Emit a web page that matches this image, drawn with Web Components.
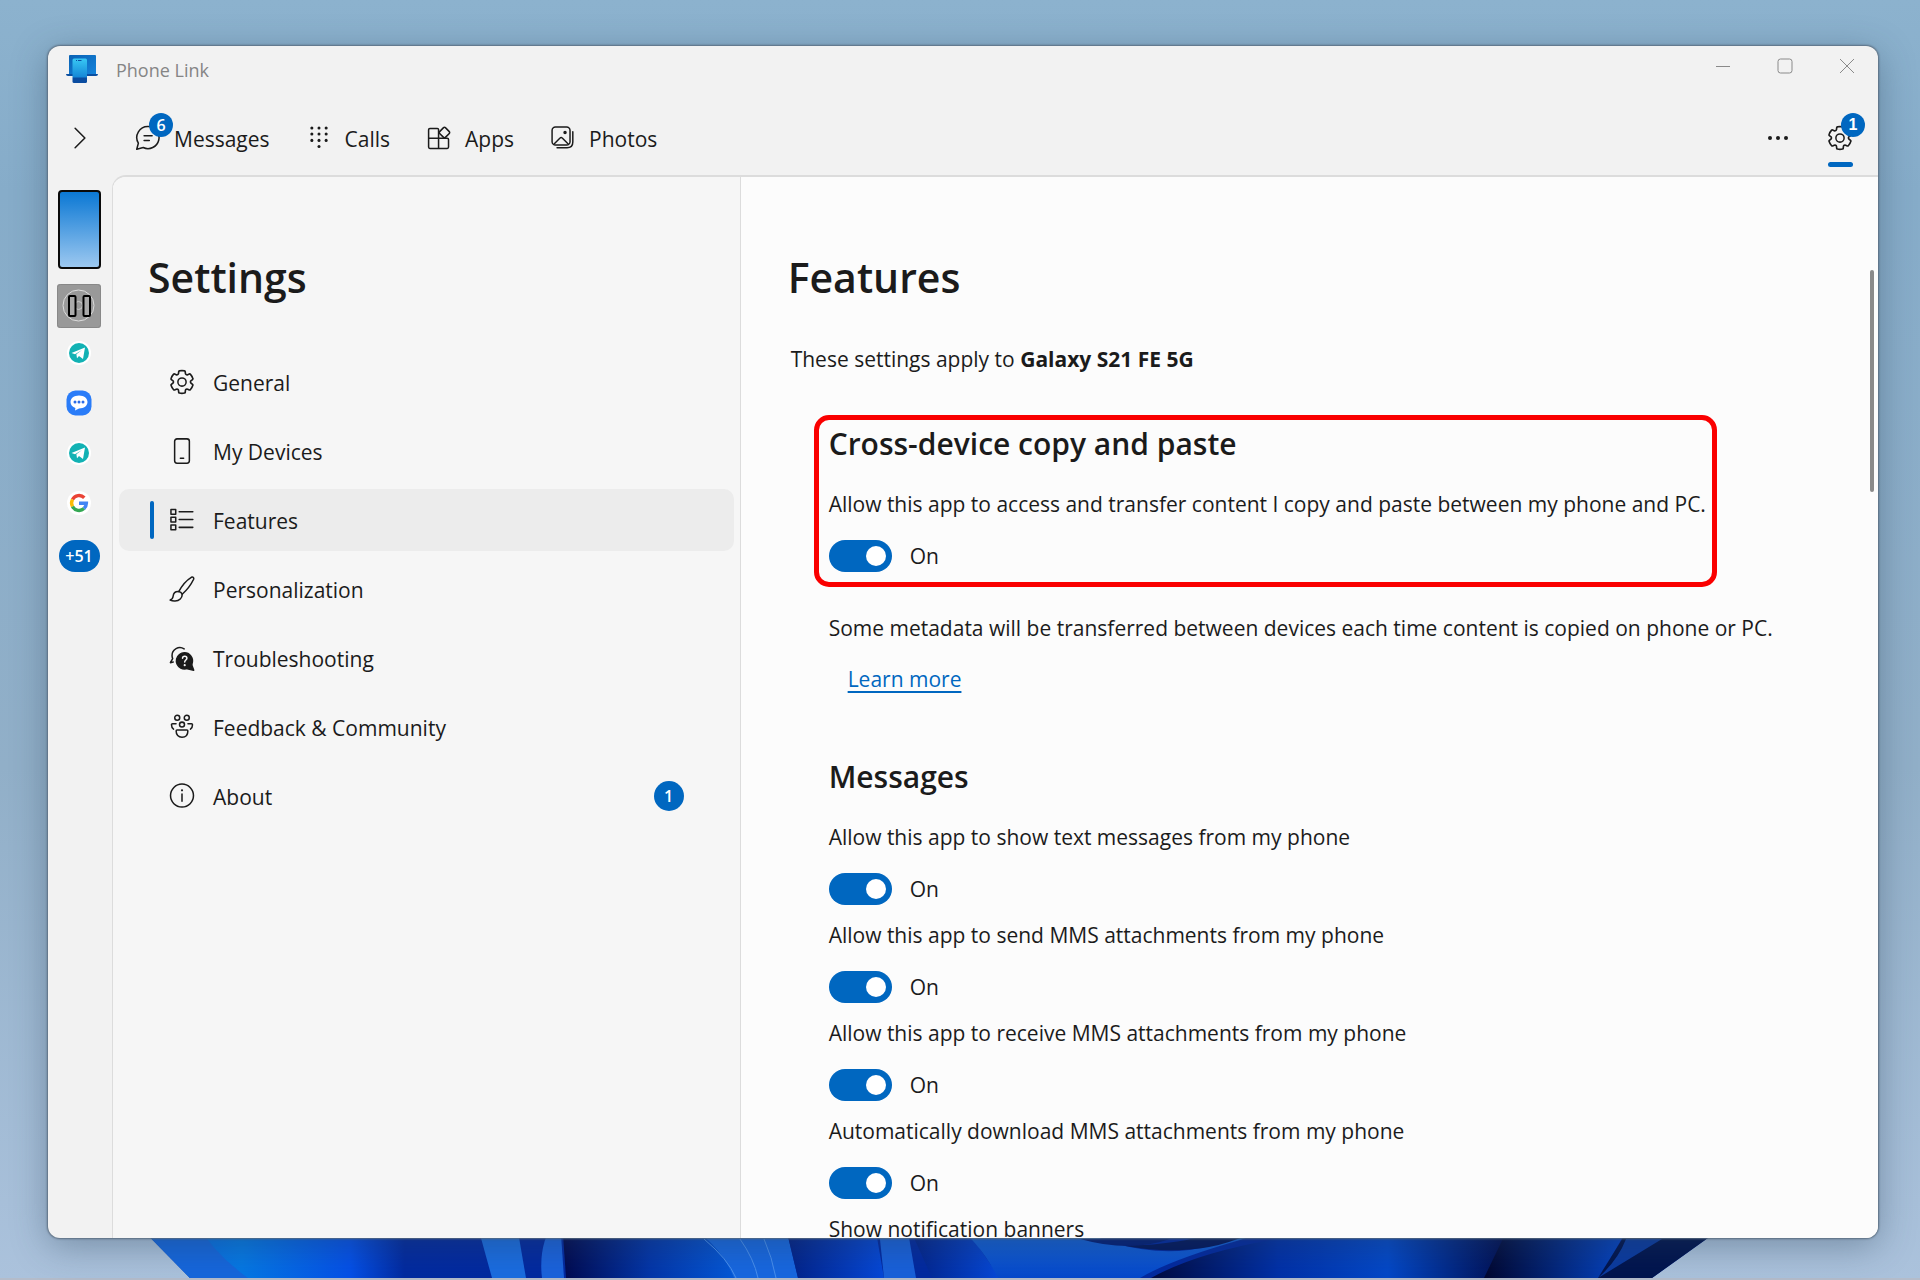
<!DOCTYPE html>
<html lang="en">
<head>
<meta charset="utf-8">
<meta name="viewport" content="width=device-width, initial-scale=1">
<title>Phone Link</title>
<style>
    body {
        margin: 0;
        font-family: "Open Sans", "Noto Sans", sans-serif;
        font-size: 21px;
        line-height: 28px;
        color: #1b1b1b;
        --accent: #0067c0;
        --line: #dcdcdc;
    }
</style>
</head>
<body>

<desk-top>
    <app-window>
        <title-bar slot="title">Phone Link</title-bar>
        <nav-bar slot="nav">
            <nav-item icon="chat" badge="6">Messages</nav-item>
            <nav-item icon="dialpad">Calls</nav-item>
            <nav-item icon="apps">Apps</nav-item>
            <nav-item icon="photos">Photos</nav-item>
        </nav-bar>
        <device-rail slot="rail"></device-rail>
        <settings-menu slot="menu" heading="Settings">
            <settings-item icon="gear">General</settings-item>
            <settings-item icon="phone">My Devices</settings-item>
            <settings-item icon="list" selected>Features</settings-item>
            <settings-item icon="brush">Personalization</settings-item>
            <settings-item icon="help">Troubleshooting</settings-item>
            <settings-item icon="people">Feedback &amp; Community</settings-item>
            <settings-item icon="info" badge="1">About</settings-item>
        </settings-menu>
        <features-page heading="Features" device="Galaxy S21 FE 5G">
            <setting-group heading="Cross-device copy and paste" outlined>
                <toggle-row checked>Allow this app to access and transfer content I copy and paste between my phone and PC.</toggle-row>
            </setting-group>
            <setting-note href="#learn-more" link="Learn more">Some metadata will be transferred between devices each time content is copied on phone or PC.</setting-note>
            <setting-group heading="Messages">
                <toggle-row checked>Allow this app to show text messages from my phone</toggle-row>
                <toggle-row checked>Allow this app to send MMS attachments from my phone</toggle-row>
                <toggle-row checked>Allow this app to receive MMS attachments from my phone</toggle-row>
                <toggle-row checked>Automatically download MMS attachments from my phone</toggle-row>
                <div>Show notification banners</div>
            </setting-group>
        </features-page>
    </app-window>
</desk-top>

<script>
const icons = {
    gear: `<path d="M12 2.25c.75 0 1.48.1 2.2.25.3.07.54.33.58.65l.17 1.53a1.38 1.38 0 0 0 1.92 1.11l1.4-.61c.3-.13.63-.06.85.17a9.8 9.8 0 0 1 2.2 3.8c.1.3 0 .63-.26.82l-1.24.92a1.38 1.38 0 0 0 0 2.22l1.24.92c.26.19.36.52.27.82a9.8 9.8 0 0 1-2.2 3.8c-.22.23-.56.3-.85.17l-1.41-.62a1.38 1.38 0 0 0-1.93 1.12l-.16 1.52a.75.75 0 0 1-.58.65 9.5 9.5 0 0 1-4.4 0 .75.75 0 0 1-.57-.65l-.17-1.52a1.38 1.38 0 0 0-1.93-1.11l-1.4.62a.75.75 0 0 1-.85-.18 9.8 9.8 0 0 1-2.2-3.8c-.1-.3 0-.63.26-.82l1.24-.92a1.38 1.38 0 0 0 0-2.22l-1.24-.92a.75.75 0 0 1-.27-.82 9.8 9.8 0 0 1 2.2-3.8.75.75 0 0 1 .85-.17l1.4.61A1.38 1.38 0 0 0 9.06 4.68l.17-1.53c.04-.32.27-.58.58-.65.72-.15 1.45-.24 2.19-.25z" transform="translate(-1 -1) scale(1.08)"/><circle cx="12" cy="12" r="3.8"/>`,
    chat: `<path d="M12.4 1.4a10.2 10.2 0 1 1-4.8 19.4L1.6 22.4l1.5-5.6A10.2 10.2 0 0 1 12.4 1.4z"/><path d="M8.4 10h7.4M8.4 14.2h4.800"/>`,
    dialpad: `<g fill="currentColor" stroke="none"><circle cx="5.4" cy="2.8" r="1.4"/><circle cx="12" cy="2.8" r="1.4"/><circle cx="18.6" cy="2.8" r="1.4"/><circle cx="5.4" cy="8.4" r="1.4"/><circle cx="12" cy="8.4" r="1.4"/><circle cx="18.6" cy="8.4" r="1.4"/><circle cx="5.4" cy="14.2" r="1.4"/><circle cx="12" cy="14.2" r="1.4"/><circle cx="18.6" cy="14.2" r="1.4"/><circle cx="12" cy="19.8" r="1.4"/></g>`,
    apps: `<path d="M11.6 12.2V4.4c0-.7-.5-1.200-1.200-1.200H3.600c-.7 0-1.200.5-1.200 1.200v16c0 .7.5 1.200 1.200 1.200h16c.7 0 1.200-.5 1.200-1.200v-7c0-.7-.5-1.200-1.200-1.200H2.400M11.600 12.200v9.400"/><path d="M16.200 2.400a1.200 1.200 0 0 1 1.700 0l3.600 3.700a1.200 1.200 0 0 1 0 1.700l-3.600 3.600a1.200 1.200 0 0 1-1.700 0l-3.600-3.600a1.200 1.200 0 0 1 0-1.700z"/>`,
    photos: `<g transform="translate(1 1) scale(.92)" stroke-width="1.5"><rect x="1" y="1" width="18" height="18" rx="3.4"/><path d="M3 18l6-6a1.500 1.500 0 0 1 2.200 0l6 6"/><circle cx="14" cy="6.400" r="1" fill="currentColor"/><path d="M21.800 5.600v10.400c0 3.600-2.200 5.800-5.800 5.800H6"/></g>`,
    phone: `<rect x="5.200" y=".8" width="13.600" height="22.400" rx="2.200"/><path d="M10.500 18.600h3"/>`,
    list: `<rect x="1.800" y="2.200" width="4.400" height="4.400"/><rect x="1.800" y="9.400" width="4.400" height="4.400"/><rect x="1.800" y="16.600" width="4.400" height="4.400"/><path d="M9.400 4.400H22M9.400 11.600H22M9.400 18.800H22"/>`,
    brush: `<path d="M9 14.400C12 8.800 17 3.400 20.600 1.200c1.600-.8 2.700.4 2 2C20.600 7.400 16.500 12.900 12.200 16.800"/><path d="M9 14.400c1.500.3 2.600 1.200 3.200 2.400.2 3.200-2.600 6.600-7.200 6.300-1.500 0-2.900-.4-3.900-.9 2-.7 2.500-1.600 2.700-3.500.3-2.700 2.300-4.500 5.200-4.300z"/>`,
    help: `<path d="M14 3.600A7.200 7.200 0 0 0 2.800 9.800c0 1 .2 2 .6 2.800L1.300 16.300l2.600-.5"/><path fill="currentColor" d="M14.300 7.200a7.400 7.400 0 1 1-3.400 14 7.400 7.400 0 0 1 3.400-14z"/><path fill="currentColor" d="M20.500 17l2.300 6.300-5.800-1.400z"/><path stroke="#f6f6f6" d="M12.500 12.200c.1-2.600 4-2.500 4 0 0 1.600-2 1.700-2 3.500"/><circle cx="14.500" cy="18.600" r="1" fill="#f6f6f6" stroke="none"/>`,
    people: `<circle cx="7.600" cy="3.400" r="2.300"/><circle cx="16.400" cy="3.400" r="2.300"/><circle cx="12" cy="9.800" r="2.300"/><path d="M7.400 14.800h9.200c.5 0 .8.300.8.800 0 3.700-2 5.800-5.400 5.800s-5.400-2.100-5.400-5.800c0-.5.3-.8.8-.8z"/><path d="M6.500 9H3.300c-.6 0-1 .4-1 1 0 1.800.5 3 1.900 4M17.500 9h3.200c.6 0 1 .4 1 1 0 1.800-.5 3-1.900 4"/>`,
    info: `<circle cx="12" cy="11.600" r="10.600"/><path d="M12 10.200v6.600"/><circle cx="12" cy="6.800" r="1" fill="currentColor" stroke="none"/>`,
    chevron: `<path d="M7.500 3l9 9-9 9"/>`,
    more: `<g fill="currentColor" stroke="none"><circle cx="4" cy="12" r="2"/><circle cx="12" cy="12" r="2"/><circle cx="20" cy="12" r="2"/></g>`
};

const define = (name, render, setup) => {
    customElements.define(name, class extends HTMLElement {
        constructor() {
            super();
            this.attachShadow({ mode: "open" });
        }

        connectedCallback() {
            const template = document.createElement("template");
            template.innerHTML = render(this);
            this.shadowRoot.replaceChildren(template.content.cloneNode(true));

            if(setup) {
                setup(this);
            }
        }
    });
};

define("ui-icon", el => `
    <style>
    :host {
        display: block;
        flex: none;
        width: 26px;
        height: 26px;
    }

    svg {
        display: block;
        width: 100%;
        height: 100%;
        fill: none;
        stroke: currentColor;
        stroke-width: 1.4;
        stroke-linecap: round;
        stroke-linejoin: round;
    }
    </style>
    <svg viewBox="0 0 24 24" aria-hidden="true">${icons[el.getAttribute("name")]}</svg>
`);

define("count-badge", () => `
    <style>
    :host {
        display: flex;
        justify-content: center;
        align-items: center;
        box-sizing: border-box;
        min-width: 24px;
        height: 24px;
        border-radius: 16px;
        background: var(--accent);
        color: #fff;
        font-size: 16px;
        font-weight: 600;
    }
    </style>
    <slot></slot>
`);

define("desk-top", () => `
    <style>
    :host {
        display: grid;
        position: relative;
        box-sizing: border-box;
        height: 100vh;
        padding: 46px 42px 42px 48px;
        background: linear-gradient(#8cb2ce, #86acc9 15%, #91afc8 60%, #abc2dc);
        overflow: hidden;
    }

    .bloom {
        position: absolute;
        left: 0;
        bottom: 0;
        width: 100%;
        height: 60px;
    }

    ::slotted(*) {
        position: relative;
        min-height: 0;
    }
    </style>
    <svg class="bloom" viewBox="0 1220 1920 60" preserveAspectRatio="none" aria-hidden="true">
        <defs>
            <linearGradient id="a"><stop offset="0" stop-color="#0f5ce0"/><stop offset=".3" stop-color="#0578e4"/><stop offset=".6" stop-color="#0450e8"/><stop offset=".75" stop-color="#022aa0"/><stop offset="1" stop-color="#0229a0"/></linearGradient>
            <linearGradient id="b"><stop offset="0" stop-color="#01094f"/><stop offset=".5" stop-color="#0335a8"/><stop offset="1" stop-color="#0458d8"/></linearGradient>
            <linearGradient id="c"><stop offset="0" stop-color="#022084"/><stop offset="1" stop-color="#0548d8"/></linearGradient>
            <linearGradient id="d"><stop offset="0" stop-color="#010a40"/><stop offset=".35" stop-color="#0130a8"/><stop offset=".65" stop-color="#0348c8"/><stop offset="1" stop-color="#010a48"/></linearGradient>
            <linearGradient id="e"><stop offset="0" stop-color="#010630"/><stop offset="1" stop-color="#0548cc"/></linearGradient>
            <linearGradient id="f" x2="0" y2="1"><stop offset="0" stop-color="#1a6ad8"/><stop offset="1" stop-color="#0448cc"/></linearGradient>
        </defs>
        <path fill="#0229a0" d="M133 1220h1600l-81 58H190z"/>
        <path fill="url(#a)" d="M133 1220h352l10 58H190z"/>
        <path fill="#1566dc" d="M133 1220h61q20 34 54 58h-58z"/>
        <path fill="#1a6ce0" d="M476 1220h40l10 58h-34z"/>
        <path fill="#1a62dc" d="M555 1220h5l4 58h-22q-4-34 13-58z"/>
        <path fill="url(#b)" d="M562 1220h130q38 30 44 58H566z"/>
        <path fill="#1767e0" d="M680 1220h104l14 58h-64q-14-36-54-58z"/>
        <path fill="none" stroke="#4a90ee" d="M704 1239q24 20 32 39M740 1239q14 20 18 39M764 1239q8 18 12 39"/>
        <path fill="url(#c)" d="M784 1220h90l10 58h-86z"/>
        <path fill="#1860da" d="M878 1220h28l10 58h-32z"/>
        <path fill="url(#c)" d="M906 1220h54l40 58h-68z"/>
        <path fill="url(#f)" d="M950 1220h110q80 44 150 26l90-26-60 20q-70 20-100 38h-142q-18-36-48-58z"/>
        <path fill="#021e78" d="M1080 1239h90q-40 14-90 0z"/>
        <path fill="#02175e" d="M1125 1246q60-2 90-14l30 4q-50 22-120 10z"/>
        <path fill="url(#d)" d="M1295 1236l220-16-30 58h-334q50-28 144-42z"/>
        <path fill="url(#e)" d="M1512 1220h120l-32 58h-116z"/>
        <path fill="#01144e" d="M1634 1220h99l-81 58h-54z"/>
        <path fill="#0a3aa0" d="M1626 1239h36l-64 39q20-18 28-39z"/>
        <path fill="#b4bcca" d="M0 1278h1920v2H0z"/>
    </svg>
    <slot></slot>
`);

define("app-window", () => `
    <style>
    :host {
        display: grid;
        grid-template: auto auto minmax(0, 1fr) / 64px minmax(0, 1fr);
        border-radius: 12px;
        background: #f2f2f2;
        box-shadow: 0 0 2px 1px #5a6c7e, 0 8px 36px #2a405866;
        overflow: hidden;
    }

    .title, .nav {
        grid-column: 1 / -1;
    }

    .body {
        display: grid;
        grid-template-columns: minmax(0, 628fr) minmax(0, 1138fr);
        border: solid var(--line);
        border-width: 2px 0 0 1px;
        border-top-left-radius: 14px;
        background: #fcfcfc;
        overflow: hidden;
    }

    ::slotted(*) {
        min-height: 0;
    }
    </style>
    <div class="title"><slot name="title"></slot></div>
    <div class="nav"><slot name="nav"></slot></div>
    <slot name="rail"></slot>
    <div class="body">
        <slot name="menu"></slot>
        <slot></slot>
    </div>
`);

define("title-bar", () => `
    <style>
    :host {
        display: flex;
        align-items: flex-start;
        height: 48px;
        color: #858585;
        font-size: 18px;
    }

    .logo {
        width: 32px;
        height: 30px;
        margin: 8px 18px 0;
    }

    .name {
        flex: 1;
        line-height: 48px;
    }

    button {
        display: grid;
        place-items: center;
        width: 62px;
        height: 40px;
        padding: 0;
        border: none;
        background: none;
        color: #8a8a8a;
    }

    button svg {
        width: 16px;
        height: 16px;
        fill: none;
        stroke: currentColor;
    }
    </style>
    <svg class="logo" viewBox="0 0 32 30" aria-hidden="true">
        <defs>
            <linearGradient id="screen" x2="1" y2="1"><stop offset="0" stop-color="#0a62b4"/><stop offset="1" stop-color="#1584dc"/></linearGradient>
            <linearGradient id="phone" x2="0" y2="1"><stop offset="0" stop-color="#38c8f4"/><stop offset=".75" stop-color="#1688d8"/><stop offset=".8" stop-color="#0a4ca0"/><stop offset="1" stop-color="#0a4ca0"/></linearGradient>
        </defs>
        <path fill="url(#screen)" d="M3 2q0-1 1-1h25q1 0 1 1v19H3z"/>
        <path fill="#0b4fa0" d="M0 20h32q0 2-2 2H2q-2 0-2-2z"/>
        <rect x="6.5" y="4.5" width="14.5" height="24.5" rx="1.5" fill="url(#phone)"/>
        <path stroke="#0a4ca0" d="M10 6.5h1M12 6.5h3.5"/>
    </svg>
    <span class="name"><slot></slot></span>
    <button aria-label="Minimize"><svg viewBox="0 0 16 16"><path d="M1 8.5h14"/></svg></button>
    <button aria-label="Maximize"><svg viewBox="0 0 16 16"><rect x="1" y="1" width="14" height="14" rx="2.5"/></svg></button>
    <button aria-label="Close"><svg viewBox="0 0 16 16"><path d="M1 1l14 14M15 1L1 15"/></svg></button>
`);

define("nav-bar", () => `
    <style>
    :host {
        display: flex;
        align-items: center;
        box-sizing: border-box;
        height: 81px;
        padding: 6px 24px 0 18px;
    }

    nav {
        display: flex;
        flex: 1;
        gap: 36px;
        margin-left: 41px;
    }

    button {
        display: grid;
        place-items: center;
        width: 28px;
        height: 62px;
        padding: 0;
        border: none;
        background: none;
        color: inherit;
    }

    .more {
        margin-right: 34px;
    }

    .more ui-icon {
        width: 24px;
    }

    .settings {
        position: relative;
    }

    .settings count-badge {
        position: absolute;
        left: 15px;
        top: 6px;
    }

    .settings::after {
        content: "";
        position: absolute;
        left: 2px;
        bottom: 2px;
        width: 25px;
        height: 5px;
        border-radius: 3px;
        background: var(--accent);
    }
    </style>
    <button aria-label="Expand"><ui-icon name="chevron"></ui-icon></button>
    <nav><slot></slot></nav>
    <button class="more" aria-label="More"><ui-icon name="more"></ui-icon></button>
    <button class="settings" aria-label="Settings"><ui-icon name="gear"></ui-icon><count-badge>1</count-badge></button>
`);

define("nav-item", el => `
    <style>
    :host {
        display: block;
    }

    a {
        display: flex;
        align-items: center;
        gap: 13px;
        position: relative;
        color: inherit;
        text-decoration: none;
    }

    .label {
        padding-top: 2px;
    }

    count-badge {
        position: absolute;
        left: 14px;
        top: -10px;
    }
    </style>
    <a href="#${el.getAttribute("icon")}">
        <ui-icon name="${el.getAttribute("icon")}"></ui-icon>
        <span class="label"><slot></slot></span>
        ${el.hasAttribute("badge") ? `<count-badge>${el.getAttribute("badge")}</count-badge>` : ""}
    </a>
`);

define("device-rail", () => `
    <style>
    :host {
        display: flex;
        flex-direction: column;
        align-items: center;
        padding: 15px 2px 0 0;
    }

    .phone {
        box-sizing: border-box;
        width: 43px;
        height: 79px;
        border: 2px solid #0a0a0a;
        border-radius: 4px;
        background: linear-gradient(#0b78d4, #9cc8f0);
    }

    .device {
        width: 44px;
        height: 44px;
        margin: 15px 0 12px;
    }

    .app {
        width: 26px;
        height: 26px;
        margin-bottom: 24px;
    }

    count-badge {
        width: 41px;
        height: 32px;
    }
    </style>
    <div class="phone"></div>
    <svg class="device" viewBox="0 0 44 44" aria-hidden="true">
        <rect width="44" height="44" rx="3" fill="#999"/>
        <rect x=".5" y=".5" width="43" height="43" rx="3" fill="none" stroke="#888"/>
        <circle cx="21.5" cy="21.5" r="15.5" fill="none" stroke="#ddd"/>
        <circle cx="21.5" cy="21.5" r="4" fill="none" stroke="#ccc"/>
        <rect x="12" y="12" width="6.5" height="20" rx="1" fill="#aaa" stroke="#000" stroke-width="2"/>
        <rect x="26.5" y="12" width="6.5" height="20" rx="1" fill="#aaa" stroke="#000" stroke-width="2"/>
    </svg>
    <svg class="app" viewBox="0 0 26 26" aria-hidden="true">
        <circle cx="13" cy="13" r="12" fill="#fff"/>
        <circle cx="13" cy="13" r="10" fill="#12b2b4"/>
        <path fill="#fff" d="M5.500 13L19 7.500l-2 11.500-4-3-2 2.200-.6-4L16 10l-7 4.200z"/>
    </svg>
    <svg class="app" viewBox="0 0 26 26" aria-hidden="true">
        <rect x=".5" y=".5" width="25" height="25" rx="9" fill="#2a7cf8"/>
        <path fill="#fff" d="M13 5.500c5 0 8.500 2.800 8.500 6.500s-3.500 6.500-8.500 6.500l-4 2 .4-2.500C6.500 17 4.500 14.800 4.500 12c0-3.700 3.500-6.500 8.500-6.500z"/>
        <g fill="#2a6ce8"><circle cx="9" cy="12" r="1.500"/><circle cx="13" cy="12" r="1.500"/><circle cx="17" cy="12" r="1.500"/></g>
    </svg>
    <svg class="app" viewBox="0 0 26 26" aria-hidden="true">
        <circle cx="13" cy="13" r="12" fill="#fff"/>
        <circle cx="13" cy="13" r="10" fill="#12b2b4"/>
        <path fill="#fff" d="M5.500 13L19 7.500l-2 11.500-4-3-2 2.200-.6-4L16 10l-7 4.200z"/>
    </svg>
    <svg class="app" viewBox="0 0 26 26" aria-hidden="true">
        <circle cx="13" cy="13" r="12" fill="#fff"/>
        <g fill="none" stroke-width="3.400">
            <path stroke="#ea4335" d="M6.500 9.500A7.400 7.400 0 0 1 18.300 7.800"/>
            <path stroke="#fbbc05" d="M6.500 16.500a7.400 7.400 0 0 1 0-7"/>
            <path stroke="#34a853" d="M18 18.500a7.400 7.400 0 0 1-11.500-2"/>
            <path stroke="#4285f4" d="M13 13.200h7.400a7.400 7.400 0 0 1-2.400 5.300"/>
        </g>
    </svg>
    <count-badge>+51</count-badge>
`);

define("settings-menu", el => `
    <style>
    :host {
        display: flex;
        flex-direction: column;
        box-sizing: border-box;
        padding: 72px 6px 0;
        border-right: 1px solid var(--line);
        background: #f6f6f6;
        overflow: hidden;
    }

    h1 {
        margin: 0 0 46px 29px;
        font-size: 41px;
        font-weight: 600;
        line-height: 56px;
    }

    nav {
        display: grid;
        gap: 7px;
    }
    </style>
    <h1>${el.getAttribute("heading")}</h1>
    <nav><slot></slot></nav>
`);

define("settings-item", el => `
    <style>
    :host {
        display: block;
    }

    a {
        display: flex;
        align-items: center;
        gap: 18px;
        position: relative;
        height: 62px;
        padding: 0 50px 0 50px;
        border-radius: 10px;
        color: inherit;
        text-decoration: none;
    }

    .label {
        flex: 1;
        padding-top: 2px;
    }

    :host([selected]) a {
        background: #ececec;
    }

    :host([selected]) a::before {
        content: "";
        position: absolute;
        left: 31px;
        width: 4px;
        height: 38px;
        border-radius: 2px;
        background: var(--accent);
    }

    count-badge {
        width: 30px;
        height: 30px;
    }
    </style>
    <a href="#${el.getAttribute("icon")}">
        <ui-icon name="${el.getAttribute("icon")}"></ui-icon>
        <span class="label"><slot></slot></span>
        ${el.hasAttribute("badge") ? `<count-badge>${el.getAttribute("badge")}</count-badge>` : ""}
    </a>
`);

define("features-page", el => `
    <style>
    :host {
        display: block;
        position: relative;
        padding: 72px 47px 0;
        overflow: hidden;
    }

    h1 {
        margin: 0 0 40px;
        font-size: 41px;
        font-weight: 600;
        line-height: 56px;
    }

    p {
        margin: 0 0 42px 3px;
    }

    .content {
        margin-left: 26px;
    }

    .thumb {
        position: absolute;
        top: 93px;
        right: 4px;
        width: 4px;
        height: 222px;
        border-radius: 2px;
        background: #8a8a8a;
    }
    </style>
    <h1>${el.getAttribute("heading")}</h1>
    <p>These settings apply to <b>${el.getAttribute("device")}</b></p>
    <div class="content"><slot></slot></div>
    <div class="thumb"></div>
`);

define("setting-group", el => `
    <style>
    :host {
        display: block;
        padding-left: 15px;
    }

    :host([outlined]) {
        width: fit-content;
        padding: 4px 6px 10px 10px;
        border: 5px solid #fa0000;
        border-radius: 15px;
    }

    h2 {
        margin: 0 0 26px;
        font-size: 30px;
        font-weight: 600;
        line-height: 40px;
    }

    .rows {
        display: grid;
        gap: 16px;
    }
    </style>
    <h2>${el.getAttribute("heading")}</h2>
    <div class="rows"><slot></slot></div>
`);

define("setting-note", el => `
    <style>
    :host {
        display: block;
        padding: 27px 0 64px 15px;
    }

    p {
        margin: 0 0 23px;
    }

    a {
        display: block;
        width: fit-content;
        margin-left: 19px;
        color: var(--accent);
        text-underline-offset: 4px;
    }
    </style>
    <p><slot></slot></p>
    <a href="${el.getAttribute("href")}">${el.getAttribute("link")}</a>
`);

define("toggle-row", el => `
    <style>
    :host {
        display: block;
    }

    label {
        display: block;
        margin-bottom: 22px;
    }

    .switch {
        display: flex;
        align-items: center;
        gap: 18px;
        height: 32px;
    }

    input {
        display: flex;
        align-items: center;
        box-sizing: border-box;
        appearance: none;
        width: 63px;
        height: 32px;
        margin: 0;
        padding: 0 6px;
        border-radius: 16px;
        background: #8a8a8a;
    }

    input::before {
        content: "";
        width: 20px;
        height: 20px;
        border-radius: 50%;
        background: #fff;
    }

    input:checked {
        justify-content: flex-end;
        background: var(--accent);
    }
    </style>
    <label for="toggle"><slot></slot></label>
    <div class="switch">
        <input type="checkbox" role="switch" id="toggle" ${el.hasAttribute("checked") ? "checked" : ""}>
        <span class="state">${el.hasAttribute("checked") ? "On" : "Off"}</span>
    </div>
`, el => {
    const input = el.shadowRoot.querySelector("input");
    const state = el.shadowRoot.querySelector(".state");

    input.addEventListener("change", () => {
        state.textContent = input.checked ? "On" : "Off";
    });
});
</script>
</body>
</html>
